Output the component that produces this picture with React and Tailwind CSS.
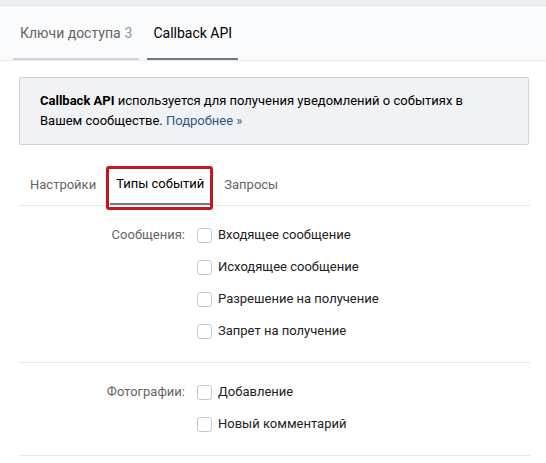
const font = { fontFamily: 'Roboto, "Open Sans", Arial, sans-serif' };

const groups = [
	{ label: 'Сообщения:', items: ['Входящее сообщение', 'Исходящее сообщение', 'Разрешение на получение', 'Запрет на получение'] },
	{ label: 'Фотографии:', items: ['Добавление', 'Новый комментарий'] },
];

function Checkbox() {
	return <span className="block w-[15px] h-[15px] shrink-0 rounded-[3px] border border-[#c1c9d1] bg-white" />;
}

export default function App() {
	return (
		<div className="w-[546px] h-[463px] overflow-hidden bg-white text-[13px] text-black" style={font}>
			<div className="h-[6px] bg-[#edeef0] border-b border-[#e3e4e8]" />

			{/* top tabs */}
			<div className="flex gap-[8px] h-[55px] pl-[13px] bg-[#fafbfc] border-b border-[#e7e8ec]">
				<div className="flex items-center px-[7px] pt-[2px] text-[14px] text-[#656565] border-b-2 border-[#d0d4d8]">
					Ключи доступа<span className="ml-[4px] text-[#939393]">3</span>
				</div>
				<div className="flex items-center px-[6px] pt-[2px] text-[14px] text-black border-b-2 border-[#667c86]">
					Callback API
				</div>
			</div>

			<div className="ml-[19px] w-[511px]">
				{/* info box */}
				<div className="mt-[16px] w-[510px] px-[20px] py-[13px] leading-[20px] bg-[#f0f2f5] border border-[#cfd4da] rounded-[2px]">
					<b className="font-bold">Callback API</b> используется для получения уведомлений о событиях в
					Вашем сообществе. <span className="text-[#2a5885]">Подробнее »</span>
				</div>

				{/* sub tabs */}
				<div className="mt-[20px] flex gap-[8px] pl-[5px] h-[41px] border-b border-[#e7e8ec]">
					<div className="flex items-center px-[6px] text-[#656565]">Настройки</div>
					<div className="relative flex items-center px-[6px] border-b-2 border-[#6d7885]">
						Типы событий
						<span className="absolute -left-[4px] -right-[3px] top-[1px] -bottom-[7px] border-[3px] border-[#c4161c] rounded-[3px]" />
					</div>
					<div className="flex items-center px-[6px] text-[#656565]">Запросы</div>
				</div>

				{groups.map((g) => (
					<div key={g.label} className="flex pt-[13px] pb-[15px] border-b border-[#e7e8ec]">
						<div className="w-[167px] pr-[1px] h-[32px] flex items-center justify-end text-[#656565]">{g.label}</div>
						<div className="ml-[11px] flex flex-col">
							{g.items.map((item) => (
								<div key={item} className="h-[32px] flex items-center gap-[6px] text-[#222]">
									<Checkbox />
									<span>{item}</span>
								</div>
							))}
						</div>
					</div>
				))}
			</div>
		</div>
	);
}
